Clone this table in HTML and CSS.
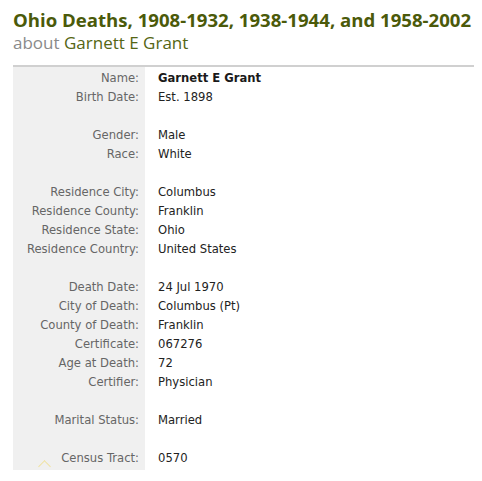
FILE: index.html
```html
<!DOCTYPE html>
<html lang="en">
<head>
    <meta charset="UTF-8">
    <title>Ohio Deaths - Garnett E Grant</title>
    <link rel="stylesheet" href="styles.css">
</head>
<body>
    <div id="record">
        <h1 class="title">Ohio Deaths, 1908-1932, 1938-1944, and 1958-2002</h1>
        <h2 class="subtitle"><span class="about">about</span> Garnett E Grant</h2>

        <table class="details">
            <tr><td class="label">Name:</td><td class="value name">Garnett E Grant</td></tr>
            <tr><td class="label">Birth Date:</td><td class="value">Est. 1898</td></tr>
            <tr class="spacer"><td class="label"></td><td class="value"></td></tr>
            <tr><td class="label">Gender:</td><td class="value">Male</td></tr>
            <tr><td class="label">Race:</td><td class="value">White</td></tr>
            <tr class="spacer"><td class="label"></td><td class="value"></td></tr>
            <tr><td class="label">Residence City:</td><td class="value">Columbus</td></tr>
            <tr><td class="label">Residence County:</td><td class="value">Franklin</td></tr>
            <tr><td class="label">Residence State:</td><td class="value">Ohio</td></tr>
            <tr><td class="label">Residence Country:</td><td class="value">United States</td></tr>
            <tr class="spacer"><td class="label"></td><td class="value"></td></tr>
            <tr><td class="label">Death Date:</td><td class="value">24 Jul 1970</td></tr>
            <tr><td class="label">City of Death:</td><td class="value">Columbus (Pt)</td></tr>
            <tr><td class="label">County of Death:</td><td class="value">Franklin</td></tr>
            <tr><td class="label">Certificate:</td><td class="value">067276</td></tr>
            <tr><td class="label">Age at Death:</td><td class="value">72</td></tr>
            <tr><td class="label">Certifier:</td><td class="value">Physician</td></tr>
            <tr class="spacer"><td class="label"></td><td class="value"></td></tr>
            <tr><td class="label">Marital Status:</td><td class="value">Married</td></tr>
            <tr class="spacer"><td class="label"></td><td class="value"></td></tr>
            <tr><td class="label">Census Tract:</td><td class="value">0570</td></tr>
            <tr class="tail"><td class="label"><span class="caret"></span></td><td class="value"></td></tr>
        </table>
    </div>
</body>
</html>
```

FILE: styles.css
```css
body {
    margin: 0;
    padding: 0;
    background-color: #ffffff;
    font-family: "DejaVu Sans", Verdana, sans-serif;
}

#record {
    padding: 8px 8px 0 13px;
}

.title {
    margin: 0;
    font-family: "Open Sans", sans-serif;
    font-size: 18.6px;
    font-weight: bold;
    line-height: 24px;
    color: #4b5a0a;
}

.subtitle {
    margin: 0 0 11px 0;
    font-family: "Open Sans", sans-serif;
    font-size: 17px;
    font-weight: normal;
    line-height: 22px;
    color: #556614;
}

.about {
    color: #8a8a8a;
}

.details {
    width: 461px;
    border-collapse: collapse;
    border-top: 2px solid #d0d0d0;
    font-size: 11.6px;
}

.details td {
    height: 17px;
    padding: 2px 0 0 0;
    vertical-align: middle;
    white-space: nowrap;
}

.label {
    width: 126px;
    padding-right: 6px !important;
    text-align: right;
    color: #666666;
    background-color: #f0f0f0;
}

.value {
    padding-left: 13px !important;
    color: #222222;
}

.name {
    font-weight: bold;
    color: #1a1a1a;
}

.tail td {
    height: 4px;
    padding: 0;
    position: relative;
}

.caret {
    position: absolute;
    left: 27px;
    top: -4px;
    width: 8px;
    height: 8px;
    border-left: 1px solid #f0e2a0;
    border-top: 1px solid #f0e2a0;
    transform: rotate(45deg);
}
```
